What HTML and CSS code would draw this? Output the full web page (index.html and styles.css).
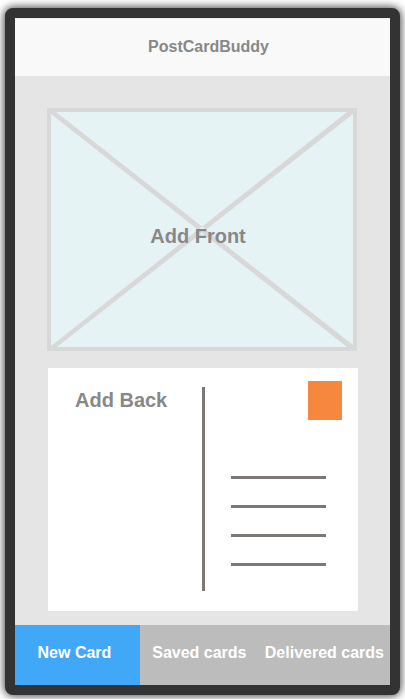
FILE: index.html
```html
<!DOCTYPE html>
<html lang="en">
<head>
  <meta charset="utf-8">
  <meta name="viewport" content="width=device-width, initial-scale=1">
  <title>PostCardBuddy</title>
  <link rel="stylesheet" href="styles.css">
</head>
<body>
  <div class="device">
    <header class="header">
      <h1 class="title">PostCardBuddy</h1>
    </header>
    <main class="cards">
      <button class="front" type="button">
        <svg class="cross" viewBox="0 0 310 243" preserveAspectRatio="none" aria-hidden="true">
          <path d="M3 0 9 4 306 237V243L300 239 4 6ZM307 0 300 4 4 238V243L10 239 306 6Z" fill="#d8d8d8"/>
        </svg>
        <span class="front-label">Add Front</span>
      </button>
      <button class="back" type="button">
        <span class="message">Add Back</span>
        <span class="address">
          <span class="stamp"></span>
          <span class="lines">
            <span class="line"></span>
            <span class="line"></span>
            <span class="line"></span>
            <span class="line"></span>
          </span>
        </span>
      </button>
    </main>
    <nav class="tabs">
      <a class="tab active" href="#new">New Card</a>
      <a class="tab" href="#saved">Saved cards</a>
      <a class="tab" href="#delivered">Delivered cards</a>
    </nav>
  </div>
</body>
</html>
```
FILE: styles.css
```css
* {
  box-sizing: border-box;
}

body {
  margin: 0;
  padding: 8px 5px 4px;
  background: #fff;
  color: #888;
  font-family: "Liberation Sans", Arial, sans-serif;
  font-weight: bold;
}

.device {
  border: 10px solid #333;
  border-radius: 8px;
  background: #e5e5e5;
  box-shadow: 0 0 8px 1px #444;
}

.header {
  padding: 18px 0 20px 12px;
  border-top: 1px solid #ececec;
  background: #f9f9f9;
  text-align: center;
}

.title {
  margin: 0;
  font-size: 16px;
  line-height: 19px;
}

.cards {
  display: flex;
  flex-direction: column;
  gap: 17px;
  padding: 32px 32px 14px;
}

.front,
.back {
  width: calc(100% - 1px);
  min-height: 243px;
  margin: 0;
  color: inherit;
  font: inherit;
  font-size: 20px;
  line-height: 26px;
}

.front {
  position: relative;
  padding: 12px 8px 0 0;
  border: 4px solid #d8d8d8;
  background: #e5f3f4;
}

.cross {
  position: absolute;
  inset: -4px;
  width: calc(100% + 8px);
  height: calc(100% + 8px);
}

.front-label {
  position: relative;
}

.back {
  display: grid;
  grid-template-columns: 130fr 137fr;
  align-self: flex-end;
  padding: 13px 16px 20px 27px;
  border: 0;
  background: #fff;
  text-align: left;
}

.message {
  margin-top: 6px;
  border-right: 3px solid #7c7875;
}

.address {
  display: flex;
  flex-direction: column;
  gap: 56px;
  padding: 0 0 25px 26px;
}

.stamp {
  align-self: flex-end;
  width: 34px;
  height: 39px;
  background: #f6873f;
}

.lines {
  display: flex;
  flex-direction: column;
  gap: 26px;
  padding-right: 16px;
}

.line {
  height: 3px;
  background: #7c7875;
}

.tabs {
  display: grid;
  grid-template-columns: repeat(3, 1fr);
  background: #bcbcbc;
}

.tab {
  padding: 18px 6px 23px 0;
  color: #fff;
  font-size: 16px;
  line-height: 19px;
  text-align: center;
  text-decoration: none;
  white-space: nowrap;
}

.active {
  background: #41a8f7;
}
```
